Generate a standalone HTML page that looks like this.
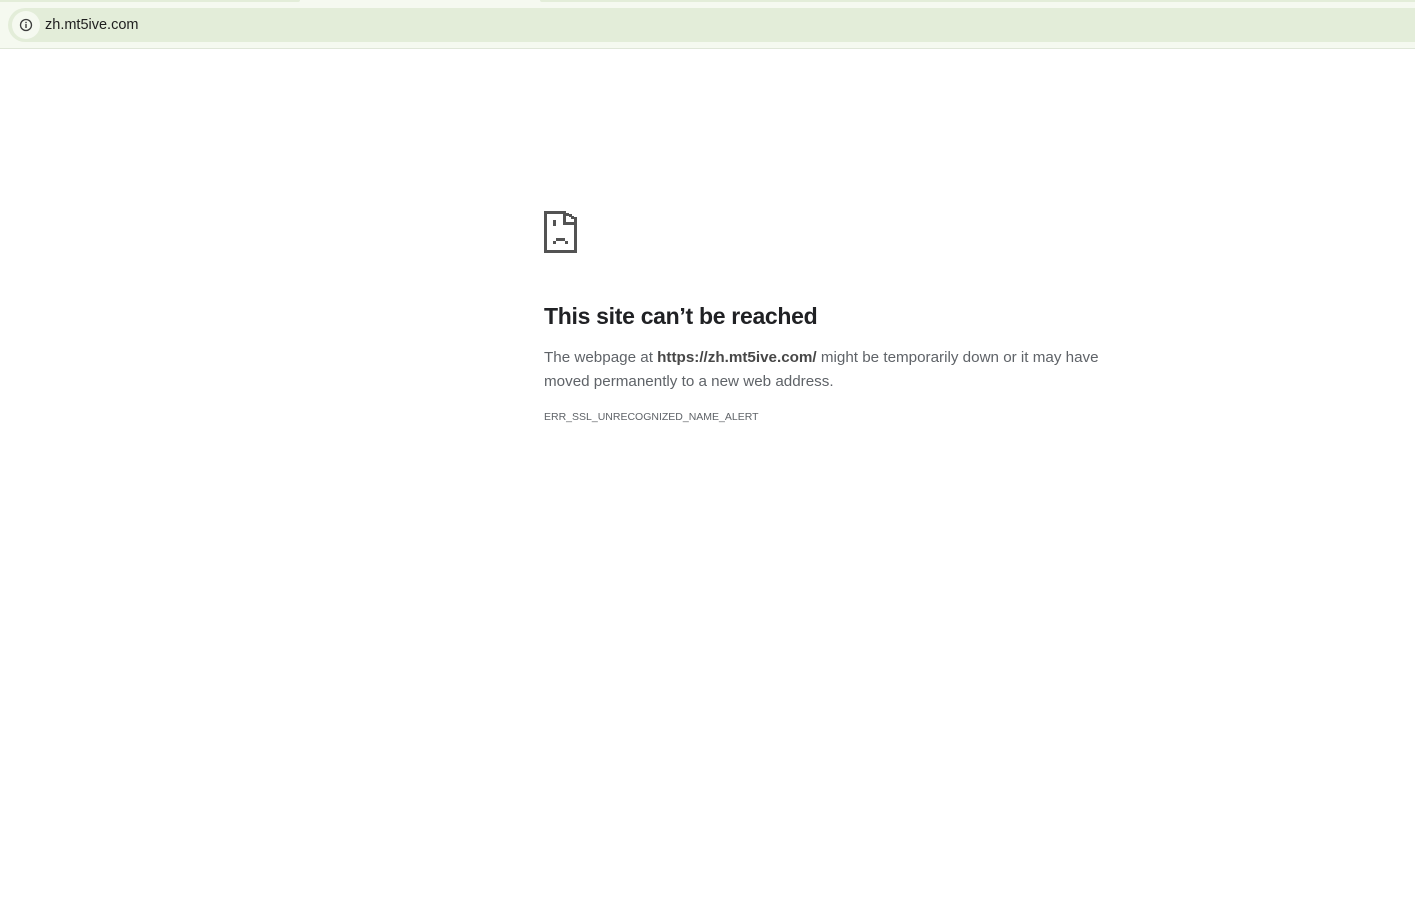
<!DOCTYPE html>
<html><head><meta charset="utf-8"><style>
html,body{margin:0;padding:0;background:#fff;width:1415px;height:912px;overflow:hidden;font-family:"Liberation Sans",sans-serif;}
.top{position:absolute;left:0;top:0;width:1415px;height:48px;background:#f5f9f0;border-bottom:1px solid #dfe6d8;}
.tab1{position:absolute;left:0;top:0;width:300px;height:2px;background:#e3edd9;border-radius:0 0 6px 0;}
.tab2{position:absolute;left:540px;top:0;width:875px;height:2px;background:#e3edd9;border-radius:0 0 0 6px;}
.omni{position:absolute;left:8px;top:8px;width:1420px;height:34px;background:#e3edd9;border-radius:17px 0 0 17px;}
.info{position:absolute;left:4px;top:3px;width:28px;height:28px;border-radius:14px;background:#f5f9f0;}
.url{position:absolute;left:37px;top:9px;font-size:14.5px;color:#1f1f1f;}
.c{position:absolute;left:544px;}
h1{position:absolute;left:544px;top:303px;margin:0;font-size:23px;font-weight:bold;color:#202124;letter-spacing:-0.3px;}
.p{top:346px;font-size:15.2px;line-height:24px;color:#5f6368;width:580px;}
.p b{color:#474747;}
.code{top:411px;font-size:10.5px;color:#5f6368;}
</style></head><body>
<div class="top"><div class="tab1"></div><div class="tab2"></div>
<div class="omni"><div class="info"><svg width="28" height="28" viewBox="0 0 28 28"><circle cx="14" cy="14" r="5.5" fill="none" stroke="#3c3c3c" stroke-width="1.3"/><rect x="13.3" y="13" width="1.4" height="4" fill="#3c3c3c"/><rect x="13.3" y="10.8" width="1.4" height="1.4" fill="#3c3c3c"/></svg></div>
<div class="url">zh.mt5ive.com</div></div></div>
<svg class="c" style="top:211px" width="34" height="42" viewBox="0 0 34 42" fill="#535353">
<rect x="0" y="0" width="3" height="42"/><rect x="0" y="39" width="33" height="3"/><rect x="30" y="6" width="3" height="36"/>
<rect x="0" y="0" width="22" height="3"/><rect x="19" y="0" width="3" height="14"/><rect x="19" y="11" width="14" height="3"/>
<rect x="22" y="2" width="3" height="3"/><rect x="25" y="3" width="3" height="3"/><rect x="27" y="5" width="3" height="3"/>
<rect x="9" y="9" width="3" height="6"/>
<rect x="12" y="27" width="9" height="3"/><rect x="9" y="30" width="3" height="3"/><rect x="21" y="30" width="3" height="3"/>
</svg>
<h1>This site can’t be reached</h1>
<div class="c p">The webpage at <b>https://zh.mt5ive.com/</b> might be temporarily down or it may have moved permanently to a new web address.</div>
<div class="c code">ERR_SSL_UNRECOGNIZED_NAME_ALERT</div>
</body></html>
